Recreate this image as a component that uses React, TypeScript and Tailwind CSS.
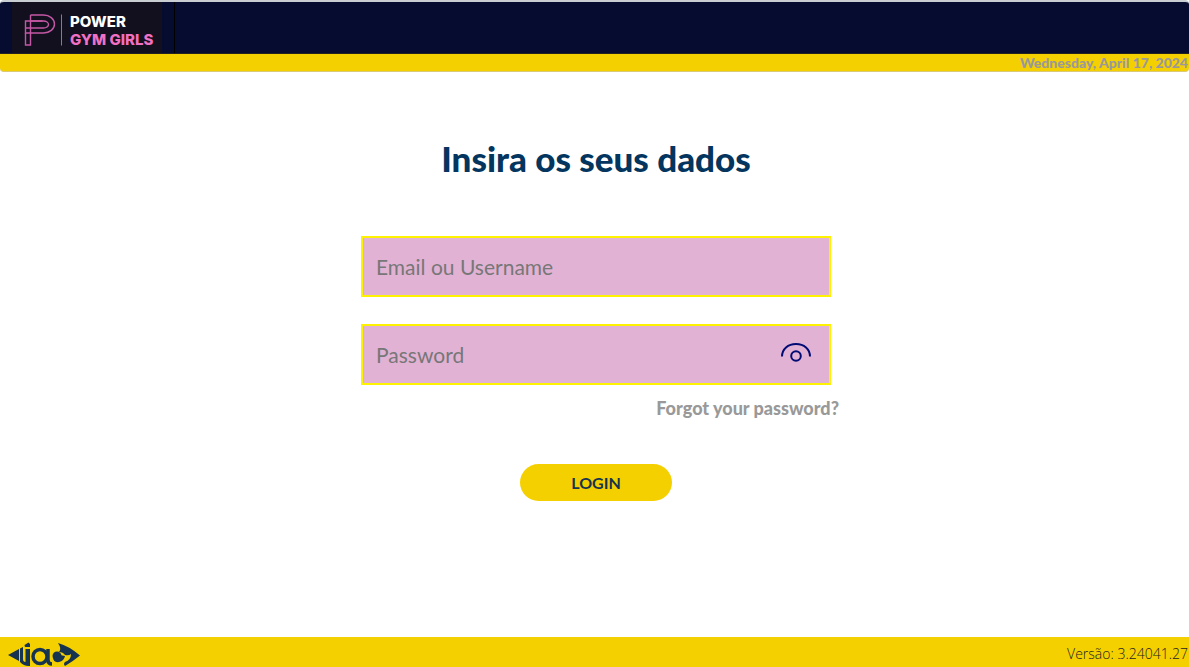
import { useState } from "react";

function GymLogo() {
  return (
    <svg viewBox="0 0 150 50" className="h-full w-[150px] bg-[#12101f]" role="img" aria-label="Power Gym Girls">
      <g fill="none" stroke="#c558a5" strokeWidth="1.4">
        <path d="M18.500 12.500h13a11 9 0 0 1 0 18h-18v-12h17" />
        <path d="M18.500 12.500v30h-5v-12" />
        <path d="M13.500 25.500h18a5 3.500 0 0 0 0-7h-13" />
        <path d="M49.500 12v31" strokeWidth="1" />
      </g>
      <g fontFamily="Inter, sans-serif" fontWeight="800">
        <text x="58" y="24" fontSize="15" fill="#fff">
          POWER
        </text>
        <text x="58" y="42" fontSize="15" fill="#f070c4">
          GYM GIRLS
        </text>
      </g>
    </svg>
  );
}

function FooterLogo() {
  return (
    <svg viewBox="0 0 76 28" className="h-7 w-[76px]" role="img" aria-label="jac">
      <g fill="#16344f">
        <path d="M2 15 13 9v12z" />
        <path d="M14 8.500l3-1.500v12q0 3 2.500 3V9H24v17q-6 .5-10-4z" />
        <path d="M18.500 5l4-2.500 1.500 1.500v3h-5z" />
        <path d="M52 3q11 3 22 12.500Q66 22 59 26q-2-2 0-4 6-2 6-8-2 2-6 1-2-3-6-3 3-3-1-9z" />
        <circle cx="51" cy="16" r="4.500" />
        <path d="M47 17q0 6 6 5 5-1 6-6l-5-1z" />
      </g>
      <g fill="none" stroke="#16344f" strokeWidth="3.500">
        <circle cx="34" cy="16.500" r="7" />
        <path d="M42 9v11q0 4 4 4" />
      </g>
    </svg>
  );
}

function EyeIcon() {
  return (
    <svg viewBox="0 0 32 20" className="h-5 w-8" fill="none" stroke="#000b73" strokeWidth="2" aria-hidden="true">
      <path d="M2 14.500C2 7 8 2 16 2s14 5 14 12.500" />
      <circle cx="16" cy="14" r="4.800" />
    </svg>
  );
}

const field =
  "block h-[61px] w-full border-2 border-[#fff200] bg-[#e2b2d5] pl-[13px] text-[21px] text-[#333] outline-none placeholder:text-[#777] placeholder:opacity-100";

export default function App() {
  const [visible, setVisible] = useState(false);

  return (
    <div className="flex min-h-screen flex-col bg-white font-['Lato',sans-serif]">
      <header>
        <div className="flex h-[54px] rounded-t-sm border-t-2 border-b border-t-[#c9ced2] border-b-[#222] bg-[#050c2f]">
          <div className="flex w-[175px] border-r border-black pl-3">
            <GymLogo />
          </div>
        </div>
        <div className="flex h-[18px] items-center justify-end rounded-b-sm border-b border-[#d9c979] bg-[#f5d000] pr-px text-sm font-black text-[#999]">
          <time dateTime="2024-04-17">Wednesday, April 17, 2024</time>
        </div>
      </header>

      <main className="flex grow flex-col items-center pt-[62px] pl-[3px]">
        <h1 className="text-[35px] leading-12 font-black text-[#03355f]">Insira os seus dados</h1>
        <form className="mt-[54px] flex w-[470px] max-w-full flex-col" onSubmit={(e) => e.preventDefault()}>
          <input className={field} type="text" aria-label="Email ou Username" placeholder="Email ou Username" />
          <div className="relative mt-[27px]">
            <input
              className={field}
              type={visible ? "text" : "password"}
              aria-label="Password"
              placeholder="Password"
            />
            <button
              type="button"
              aria-label="Show password"
              className="absolute top-[18px] right-[19px]"
              onClick={() => setVisible(!visible)}
            >
              <EyeIcon />
            </button>
          </div>
          <a href="#forgot" className="-mr-2 mt-[11px] self-end text-lg leading-6 font-black text-[#999]">
            Forgot your password?
          </a>
          <button
            type="submit"
            className="mt-11 h-[37px] w-[152px] self-center rounded-full bg-[#f5d000] text-base font-bold text-[#16344f]"
          >
            LOGIN
          </button>
        </form>
      </main>

      <footer className="flex h-[30px] items-center justify-between bg-[#f5d000] pt-1 pr-px pl-1.5">
        <FooterLogo />
        <span className="font-['Open_Sans',sans-serif] text-sm font-light text-[#222]">Versão: 3.24041.27</span>
      </footer>
    </div>
  );
}
